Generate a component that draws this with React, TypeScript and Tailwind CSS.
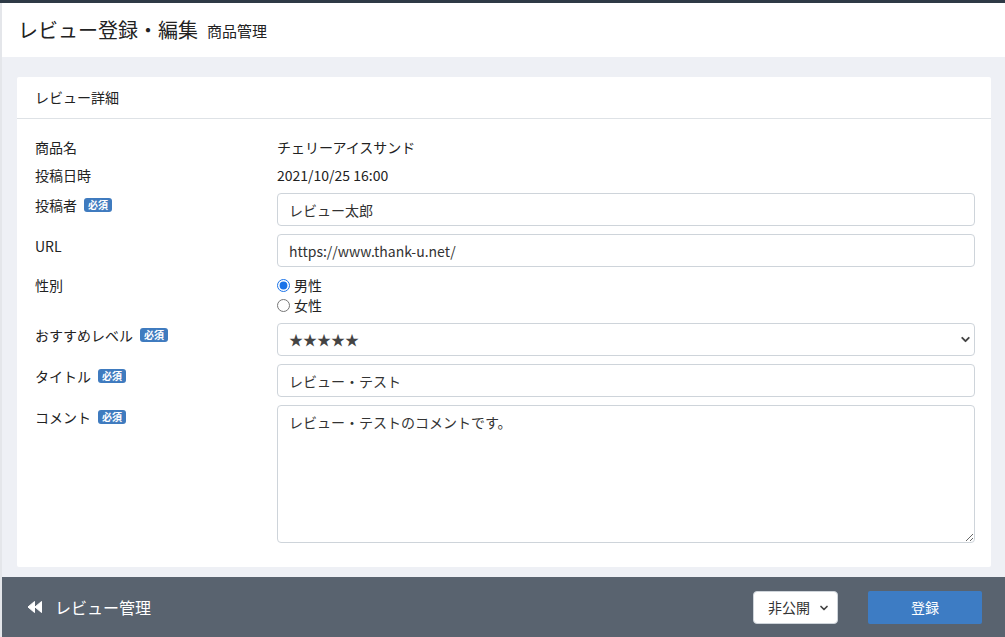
import { ChevronDown } from 'lucide-react'

const font = { fontFamily: '"Noto Sans CJK JP", "Noto Sans", "Liberation Sans", sans-serif' }

function Required() {
  return (
    <span className="ml-[7px] inline-flex h-[14px] items-center rounded-[3px] bg-[#3f7bbf] px-[4px] text-[10px] font-bold leading-none text-white">
      必須
    </span>
  )
}

function Row({
  label,
  required,
  field,
  children,
}: {
  label: string
  required?: boolean
  field?: boolean
  children: React.ReactNode
}) {
  return (
    <div className="flex">
      <div className={'flex w-[242px] shrink-0 items-start leading-[20px] ' + (field ? 'pt-[2px]' : '')}>
        <span>{label}</span>
        {required && <span className="mt-[3px] flex"><Required /></span>}
      </div>
      <div className="flex-1">{children}</div>
    </div>
  )
}

const inputCls =
  'h-[33px] w-full rounded-[4px] border border-[#ced4da] bg-white px-[11px] text-[14px] text-[#333] outline-none'

export default function App() {
  return (
    <div className="flex h-[637px] w-full flex-col text-[14px] text-[#222]" style={font}>
      <div className="h-[3px] bg-[#2e3a46]" />
      <div className="flex flex-1 border-l-2 border-[#e4e6ea]">
        <div className="flex flex-1 flex-col">
          <header className="flex h-[54px] items-center gap-[9px] bg-white pl-[16px]">
            <h1 className="text-[20px] font-normal text-[#222]">レビュー登録・編集</h1>
            <span className="pt-[2px] text-[15px] text-[#222]">商品管理</span>
          </header>

          <main className="flex-1 bg-[#eef0f5] pl-[15px] pr-[14px] pt-[20px]">
            <section className="rounded-[2px] bg-white">
              <div className="flex h-[42px] items-center border-b border-[#dee2e6] px-[18px] text-[14px]">
                レビュー詳細
              </div>
              <div className="flex flex-col gap-2 pb-[24px] pl-[18px] pr-[16px] pt-[18px]">
                <Row label="商品名">
                  <div className="leading-[20px]">チェリーアイスサンド</div>
                </Row>
                <Row label="投稿日時">
                  <div className="leading-[20px]">2021/10/25 16:00</div>
                </Row>
                <Row label="投稿者" required field>
                  <input className={inputCls} defaultValue="レビュー太郎" />
                </Row>
                <Row label="URL" field>
                  <input className={inputCls} defaultValue="https://www.thank-u.net/" />
                </Row>
                <Row label="性別">
                  <div className="flex flex-col">
                    <label className="flex h-[20px] items-center gap-[4px]">
                      <input type="radio" name="sex" defaultChecked className="m-0 h-[13px] w-[13px] accent-[#1a73e8]" />
                      男性
                    </label>
                    <label className="flex h-[20px] items-center gap-[4px]">
                      <input type="radio" name="sex" className="m-0 h-[13px] w-[13px]" />
                      女性
                    </label>
                  </div>
                </Row>
                <Row label="おすすめレベル" required field>
                  <div className="relative">
                    <select className={inputCls + ' h-[32px] appearance-none text-[#444]'} defaultValue="5">
                      <option value="5">★★★★★</option>
                      <option value="4">★★★★</option>
                    </select>
                    <ChevronDown className="pointer-events-none absolute right-[3px] top-[10px] h-[13px] w-[13px] text-[#444]" strokeWidth={3.5} />
                  </div>
                </Row>
                <Row label="タイトル" required field>
                  <input className={inputCls} defaultValue="レビュー・テスト" />
                </Row>
                <Row label="コメント" required field>
                  <textarea
                    className="block h-[138px] w-full rounded-[4px] border border-[#ced4da] bg-white px-[11px] py-[6px] text-[14px] leading-[20px] text-[#333] outline-none"
                    defaultValue="レビュー・テストのコメントです。"
                  />
                </Row>
              </div>
            </section>
          </main>

          <footer className="flex h-[60px] items-center bg-[#59636f] pl-[25px] pr-[23px]">
            <div className="flex items-center gap-[12px] text-[16px] text-white">
              <svg width="16" height="12" viewBox="0 0 16 12" fill="white">
                <path d="M7.5 0.5 L7.5 11.5 L1 6 Z" strokeLinejoin="round" stroke="white" strokeWidth="1" />
                <path d="M14.5 0.5 L14.5 11.5 L8 6 Z" strokeLinejoin="round" stroke="white" strokeWidth="1" />
              </svg>
              <span>レビュー管理</span>
            </div>
            <div className="ml-auto flex items-center gap-[30px]">
              <div className="relative">
                <select
                  className="h-[33px] w-[85px] appearance-none rounded-[4px] border border-[#ced4da] bg-white pl-[14px] text-[14px] text-[#333] outline-none"
                  defaultValue="private"
                >
                  <option value="private">非公開</option>
                  <option value="public">公開</option>
                </select>
                <ChevronDown className="pointer-events-none absolute right-[8px] top-[11px] h-[12px] w-[12px] text-[#444]" strokeWidth={3.5} />
              </div>
              <button className="h-[33px] w-[114px] rounded-[2px] bg-[#3d7cc4] text-[14px] text-white">登録</button>
            </div>
          </footer>
        </div>
      </div>
    </div>
  )
}
